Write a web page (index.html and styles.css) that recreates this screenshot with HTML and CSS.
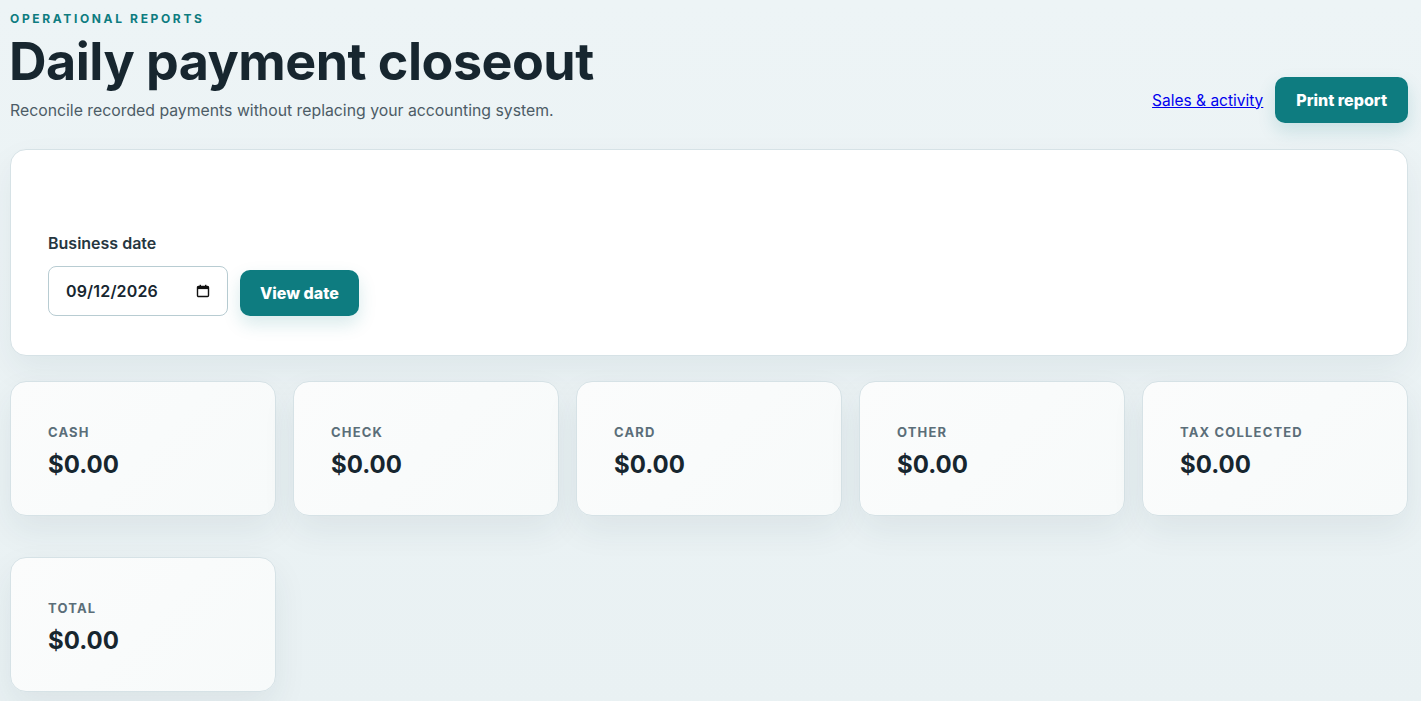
FILE: index.html
```html
<!DOCTYPE html>
<html lang="en">
<head>
<meta charset="utf-8">
<title>Daily payment closeout</title>
<link rel="stylesheet" href="styles.css">
</head>
<body>
<main class="page">
  <header class="page-header">
    <div class="titles">
      <p class="eyebrow">Operational reports</p>
      <h1 class="title">Daily payment closeout</h1>
      <p class="subtitle">Reconcile recorded payments without replacing your accounting system.</p>
    </div>
    <div class="actions">
      <a class="link" href="#">Sales &amp; activity</a>
      <button class="btn btn-lg" type="button">Print report</button>
    </div>
  </header>

  <section class="panel">
    <form class="date-form">
      <label class="field-label" for="bdate">Business date</label>
      <div class="field-row">
        <div class="date-input" id="bdate">
          <span class="date-value">09/12/2026</span>
          <svg class="cal" width="14" height="14" viewBox="0 0 14 14" aria-hidden="true">
            <rect x="1.5" y="2.5" width="11" height="10" rx="1" fill="none" stroke="#111" stroke-width="1.4"/>
            <rect x="1.5" y="2.5" width="11" height="2.6" fill="#111"/>
            <rect x="3.6" y="0.8" width="1.4" height="2.5" fill="#111"/>
            <rect x="9" y="0.8" width="1.4" height="2.5" fill="#111"/>
          </svg>
        </div>
        <button class="btn" type="button">View date</button>
      </div>
    </form>
  </section>

  <section class="stats">
    <div class="stat"><span class="stat-label">Cash</span><span class="stat-value">$0.00</span></div>
    <div class="stat"><span class="stat-label">Check</span><span class="stat-value">$0.00</span></div>
    <div class="stat"><span class="stat-label">Card</span><span class="stat-value">$0.00</span></div>
    <div class="stat"><span class="stat-label">Other</span><span class="stat-value">$0.00</span></div>
    <div class="stat"><span class="stat-label">Tax collected</span><span class="stat-value">$0.00</span></div>
  </section>

  <section class="stats totals">
    <div class="stat"><span class="stat-label">Total</span><span class="stat-value">$0.00</span></div>
  </section>
</main>
</body>
</html>
```

FILE: styles.css
```css
* { box-sizing: border-box; }

html, body {
  margin: 0;
  background: #ecf3f5;
  font-family: Inter, "Liberation Sans", sans-serif;
  color: #17262f;
}

.page {
  padding: 11px 13px 20px 10px;
  background: linear-gradient(180deg, #edf4f6 0%, #e9f1f3 100%);
  min-height: 100vh;
}

.page-header {
  display: flex;
  justify-content: space-between;
  align-items: flex-end;
  gap: 24px;
}

.eyebrow {
  margin: 0;
  font-size: 12px;
  font-weight: 700;
  letter-spacing: 0.22em;
  text-transform: uppercase;
  color: #0e7c80;
  line-height: 16px;
}

.title {
  margin: 5px 0 0 -1px;
  font-size: 52px;
  line-height: 60px;
  font-weight: 700;
  letter-spacing: -0.01em;
  color: #17262f;
}

.subtitle {
  margin: 7px 0 0;
  font-size: 15.8px;
  line-height: 24px;
  color: #4c5c66;
}

.actions {
  display: flex;
  align-items: center;
  gap: 12px;
  margin-bottom: 0;
}

.link {
  color: #0000ee;
  font-size: 15.5px;
  text-decoration: underline;
}

.btn {
  border: 0;
  background: #0e7c80;
  color: #fff;
  font-family: inherit;
  font-weight: 800;
  font-size: 16px;
  height: 46px;
  padding: 0 20px;
  border-radius: 10px;
  box-shadow: 0 8px 18px rgba(14, 124, 128, 0.16);
  cursor: pointer;
}

.btn-lg {
  padding: 0 21px;
}

.panel {
  margin-top: 26px;
  background: #fff;
  border: 1px solid #d6e2e6;
  border-radius: 16px;
  padding: 83px 37px 39px;
  box-shadow: 0 14px 34px rgba(23, 55, 66, 0.06);
}

.date-form {
  display: flex;
  flex-direction: column;
  gap: 13px;
}

.field-label {
  font-size: 16px;
  font-weight: 600;
  color: #26363f;
  line-height: 20px;
}

.field-row {
  display: flex;
  align-items: flex-end;
  gap: 12px;
}

.date-input {
  width: 180px;
  height: 50px;
  border: 1px solid #b8ccd2;
  border-radius: 8px;
  background: #fff;
  display: flex;
  align-items: center;
  justify-content: space-between;
  padding: 0 17px;
  font-size: 16px;
  font-weight: 600;
  color: #17262f;
}

.date-value { letter-spacing: 0.01em; }

.stats {
  margin-top: 25px;
  display: grid;
  grid-template-columns: repeat(5, 1fr);
  gap: 17px;
}

.totals {
  margin-top: 41px;
}

.stat {
  height: 135px;
  background: linear-gradient(135deg, #fbfcfc 0%, #f7fafa 100%);
  border: 1px solid #d6e2e6;
  border-radius: 16px;
  padding: 6px 37px 0;
  display: flex;
  flex-direction: column;
  justify-content: center;
  gap: 8px;
  box-shadow: 0 14px 34px rgba(23, 55, 66, 0.07);
}

.stat-label {
  font-size: 13px;
  font-weight: 700;
  letter-spacing: 0.09em;
  text-transform: uppercase;
  color: #5b6e79;
  line-height: 18px;
}

.stat-value {
  font-size: 24px;
  font-weight: 700;
  color: #17262f;
  line-height: 32px;
}
```
